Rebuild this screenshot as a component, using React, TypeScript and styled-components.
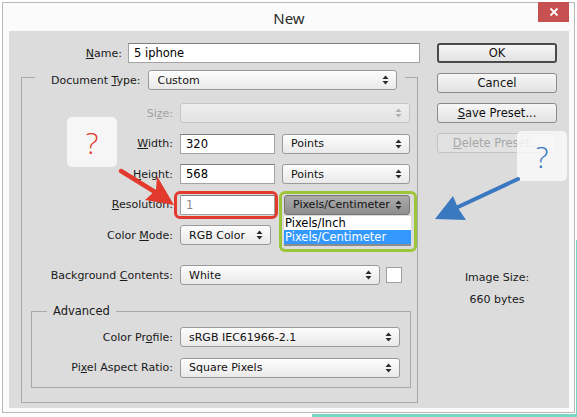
import React from 'react';
import styled, { createGlobalStyle, css } from 'styled-components';

const GlobalStyle = createGlobalStyle`
  html, body {
    margin: 0;
    padding: 0;
    background: #ffffff;
  }
  body {
    font-family: 'DejaVu Sans', 'Liberation Sans', sans-serif;
    font-size: 11px;
    color: #1a1a1a;
  }
  #root {
    width: 577px;
    height: 417px;
  }
`;

type SelectVariant = 'normal' | 'disabled' | 'dark';

const Arrows = ({ color }: { color: string }) => (
  <svg width="7" height="10" viewBox="0 0 7 10">
    <path d="M0.5 4 L3.5 0.5 L6.5 4 Z" fill={color} />
    <path d="M0.5 6 L3.5 9.5 L6.5 6 Z" fill={color} />
  </svg>
);

const Select = ({ value, width, variant = 'normal' }: { value: string; width: number; variant?: SelectVariant }) => (
  <SelectBox $w={width} $variant={variant}>
    <SelectText>{value}</SelectText>
    <Arrows color={variant === 'disabled' ? '#b0b0b0' : '#2a2a2a'} />
  </SelectBox>
);

const App = () => {
  return (
    <Stage>
      <GlobalStyle />
      <Window>
        <TitleBar>
          <Title>New</Title>
          <CloseBtn>
            <svg width="10" height="10" viewBox="0 0 10 10">
              <path d="M1.5 1.5 L8.5 8.5 M8.5 1.5 L1.5 8.5" stroke="#fff" strokeWidth="1.8" />
            </svg>
          </CloseBtn>
        </TitleBar>
        <Body>
          <LeftCol>
            <Row>
              <FieldLabel $w={101}>
                <u>N</u>ame:
              </FieldLabel>
              <TextInput $w={292} style={{ marginLeft: -1 }}>5 iphone</TextInput>
            </Row>
            <Group>
              <Legend>
                <LegendInner>
                  <span>
                    Document <u>T</u>ype:
                  </span>
                  <Select value="Custom" width={249} />
                </LegendInner>
              </Legend>
              <Stack>
                <Row>
                  <FieldLabel $w={151} $disabled>
                    Si<u>z</u>e:
                  </FieldLabel>
                  <Select value="" width={230} variant="disabled" />
                </Row>
                <Row>
                  <FieldLabel $w={151}>
                    <u>W</u>idth:
                  </FieldLabel>
                  <TextInput $w={95}>320</TextInput>
                  <Select value="Points" width={128} />
                </Row>
                <Row>
                  <FieldLabel $w={151}>
                    <u>H</u>eight:
                  </FieldLabel>
                  <TextInput $w={95}>568</TextInput>
                  <Select value="Points" width={128} />
                </Row>
                <Row>
                  <FieldLabel $w={151}>
                    <u>R</u>esolution:
                  </FieldLabel>
                  <RedMark>
                    <TextInput $w={95} $muted>
                      1
                    </TextInput>
                  </RedMark>
                  <GreenMark>
                    <Select value="Pixels/Centimeter" width={126} variant="dark" />
                    <ListBox>
                      <ListItem>Pixels/Inch</ListItem>
                      <ListItem $selected>Pixels/Centimeter</ListItem>
                    </ListBox>
                  </GreenMark>
                </Row>
                <Row>
                  <FieldLabel $w={151}>
                    Color <u>M</u>ode:
                  </FieldLabel>
                  <Select value="RGB Color" width={91} />
                </Row>
                <Row $mt={9.5}>
                  <FieldLabel $w={151}>
                    Background <u>C</u>ontents:
                  </FieldLabel>
                  <Select value="White" width={200} />
                  <Swatch />
                </Row>
              </Stack>
              <SubGroup>
                <SubLegend>Advanced</SubLegend>
                <Stack>
                  <Row>
                    <FieldLabel $w={141}>
                      Color Pr<u>o</u>file:
                    </FieldLabel>
                    <Select value="sRGB IEC61966-2.1" width={220} />
                  </Row>
                  <Row>
                    <FieldLabel $w={141}>
                      Pi<u>x</u>el Aspect Ratio:
                    </FieldLabel>
                    <Select value="Square Pixels" width={220} />
                  </Row>
                </Stack>
              </SubGroup>
            </Group>
          </LeftCol>
          <RightCol>
            <Button $primary>OK</Button>
            <Button>Cancel</Button>
            <Button>
              <u>S</u>ave Preset...
            </Button>
            <Button $disabled>
              <u>D</u>elete Preset...
            </Button>
            <SizeInfo>
              <div>Image Size:</div>
              <div>660 bytes</div>
            </SizeInfo>
          </RightCol>
        </Body>
      </Window>

      <NoteCard $tone="red" style={{ left: 67, top: 117 }}>?</NoteCard>
      <NoteCard $tone="blue" style={{ left: 517, top: 131 }}>?</NoteCard>
      <ArrowLayer width="577" height="417" viewBox="0 0 577 417">
        <line x1="121" y1="171" x2="155" y2="192" stroke="#e23b2e" strokeWidth="4.5" strokeLinecap="round" />
        <path d="M174 205 L157 176 L156 190 L145 200 Z" fill="#e23b2e" />
        <line x1="518" y1="179" x2="458" y2="207" stroke="#3a78bf" strokeWidth="4" strokeLinecap="round" />
        <path d="M435 219 L453 196 L458 208 L466 220 Z" fill="#3a78bf" />
      </ArrowLayer>
      <TealEdge />
    </Stage>
  );
};

export default App;

const Stage = styled.div`
  position: relative;
  width: 577px;
  height: 417px;
  padding: 2px 2px 0 2px;
  box-sizing: border-box;
  overflow: hidden;
`;

const TealEdge = styled.div`
  position: absolute;
  right: 0;
  bottom: 0;
  width: 265px;
  height: 177px;
  box-sizing: border-box;
  border-right: 1px solid #76d6c0;
  border-bottom: 3px solid #76d6c0;
  pointer-events: none;
`;

const Window = styled.div`
  width: 573px;
  height: 411px;
  box-sizing: border-box;
  border: 1px solid #b9b9b9;
  background: #fbfbfb;
  padding: 0 5px 4px 6px;
  display: flex;
  flex-direction: column;
`;

const TitleBar = styled.div`
  position: relative;
  height: 28px;
  display: flex;
  align-items: center;
  justify-content: center;
`;

const Title = styled.div`
  font-family: 'Noto Sans', 'Open Sans', sans-serif;
  font-size: 15px;
  color: #2b2b2b;
  margin-top: 1px;
`;

const CloseBtn = styled.div`
  position: absolute;
  top: -1px;
  right: 0;
  width: 31px;
  height: 20px;
  background: #c75050;
  display: flex;
  align-items: center;
  justify-content: center;
`;

const Body = styled.div`
  flex: 1;
  background: #dcdcdc;
  display: flex;
  padding: 12px 12px 0 12px;
`;

const LeftCol = styled.div`
  width: 399px;
  display: flex;
  flex-direction: column;
`;

const RightCol = styled.div`
  width: 120px;
  margin-left: 17px;
  display: flex;
  flex-direction: column;
  gap: 10px;
`;

const Row = styled.div<{ $mt?: number }>`
  display: flex;
  align-items: center;
  height: 20px;
  gap: 7px;
  ${(p) => (p.$mt ? `margin-top: ${p.$mt}px;` : '')}
`;

const Stack = styled.div`
  display: flex;
  flex-direction: column;
  gap: 10.5px;
`;

const FieldLabel = styled.div<{ $w: number; $disabled?: boolean }>`
  width: ${(p) => p.$w}px;
  flex-shrink: 0;
  text-align: right;
  white-space: nowrap;
  color: ${(p) => (p.$disabled ? '#a2a2a2' : '#1a1a1a')};
`;

const TextInput = styled.div<{ $w: number; $muted?: boolean }>`
  width: ${(p) => p.$w}px;
  height: 20px;
  box-sizing: border-box;
  background: #ffffff;
  border: 1px solid #a3a3a3;
  border-top-color: #7f7f7f;
  padding: 0 5px;
  display: flex;
  align-items: center;
  font-size: 11.5px;
  color: ${(p) => (p.$muted ? '#8a8a8a' : '#000')};
`;

const variantStyles = {
  normal: css`
    background: linear-gradient(#fdfdfd, #e9e9e9);
    border: 1px solid #9a9a9a;
    color: #111;
  `,
  disabled: css`
    background: linear-gradient(#eeeeee, #e3e3e3);
    border: 1px solid #c6c6c6;
    color: #999;
  `,
  dark: css`
    background: linear-gradient(#acacac, #8e8e8e);
    border: 1px solid #777;
    color: #111;
  `,
};

const SelectBox = styled.div<{ $w: number; $variant: SelectVariant }>`
  width: ${(p) => p.$w}px;
  height: 20px;
  box-sizing: border-box;
  border-radius: 3px;
  padding: 0 7px 0 8px;
  display: flex;
  align-items: center;
  justify-content: space-between;
  flex-shrink: 0;
  font-size: 11px;
  ${(p) => variantStyles[p.$variant]}
`;

const SelectText = styled.span`
  white-space: nowrap;
`;

const Group = styled.fieldset`
  margin: 1px 2px 0 0;
  padding: 13px 0 7px 0;
  border: 1px solid #a9a9a9;
  min-width: 0;
`;

const Legend = styled.legend`
  margin-left: 13px;
  padding: 6px 8px 0 16px;
`;

const LegendInner = styled.span`
  display: inline-flex;
  align-items: center;
  gap: 8px;
  white-space: nowrap;
`;

const SubGroup = styled.fieldset`
  margin: 19px 6px 7px 9px;
  padding: 9px 0 9px 0;
  border: 1px solid #a9a9a9;
  min-width: 0;
`;

const SubLegend = styled.legend`
  margin-left: 15px;
  padding: 0 6px;
  line-height: 14px;
  font-size: 11.5px;
`;

const RedMark = styled.div`
  position: relative;
  &::after {
    content: '';
    position: absolute;
    top: -4px;
    bottom: -4px;
    left: -6px;
    right: -3px;
    border: 3.5px solid #e23b2e;
    border-radius: 6px;
    pointer-events: none;
  }
`;

const GreenMark = styled.div`
  position: relative;
  margin-left: 2px;
  &::after {
    content: '';
    position: absolute;
    top: -4px;
    bottom: -37px;
    left: -5px;
    right: -7px;
    border: 3px solid #9dc53c;
    border-radius: 6px;
    pointer-events: none;
  }
`;

const ListBox = styled.div`
  position: absolute;
  top: 21px;
  left: 0;
  width: 127px;
  background: #ffffff;
  border-bottom: 2px solid #8c8c8c;
  z-index: 2;
`;

const ListItem = styled.div<{ $selected?: boolean }>`
  height: 14px;
  line-height: 14px;
  padding-left: 1px;
  font-size: 11.5px;
  white-space: nowrap;
  background: ${(p) => (p.$selected ? '#3399ff' : '#ffffff')};
  color: ${(p) => (p.$selected ? '#ffffff' : '#000')};
`;

const Swatch = styled.div`
  width: 16px;
  height: 16px;
  box-sizing: border-box;
  margin-left: -1px;
  background: #ffffff;
  border: 1px solid #a0a0a0;
`;

const Button = styled.div<{ $primary?: boolean; $disabled?: boolean }>`
  height: 20px;
  box-sizing: border-box;
  border-radius: 3px;
  display: flex;
  align-items: center;
  justify-content: center;
  font-size: 11.5px;
  background: linear-gradient(#f7f7f7, #e2e2e2);
  border: 1px solid #8a8a8a;
  color: #111;
  ${(p) =>
    p.$primary &&
    css`
      border: 2px solid #4a4a4a;
    `}
  ${(p) =>
    p.$disabled &&
    css`
      background: #e2e2e2;
      border-color: #c2c2c2;
      color: #a6a6a6;
    `}
`;

const SizeInfo = styled.div`
  margin-top: 104px;
  text-align: center;
  line-height: 22px;
  font-size: 11px;
  color: #1a1a1a;
`;

const NoteCard = styled.div<{ $tone: 'red' | 'blue' }>`
  position: absolute;
  width: 50px;
  height: 50px;
  border-radius: 5px;
  display: flex;
  align-items: center;
  justify-content: center;
  font-family: 'Open Sans', 'DejaVu Sans', sans-serif;
  font-weight: 300;
  font-size: 30px;
  ${(p) =>
    p.$tone === 'red'
      ? css`
          background: #f6f6f6;
          color: #e23b2e;
        `
      : css`
          background: rgba(250, 250, 250, 0.82);
          color: #3a78bf;
        `}
`;

const ArrowLayer = styled.svg`
  position: absolute;
  left: 0;
  top: 0;
  pointer-events: none;
`;
